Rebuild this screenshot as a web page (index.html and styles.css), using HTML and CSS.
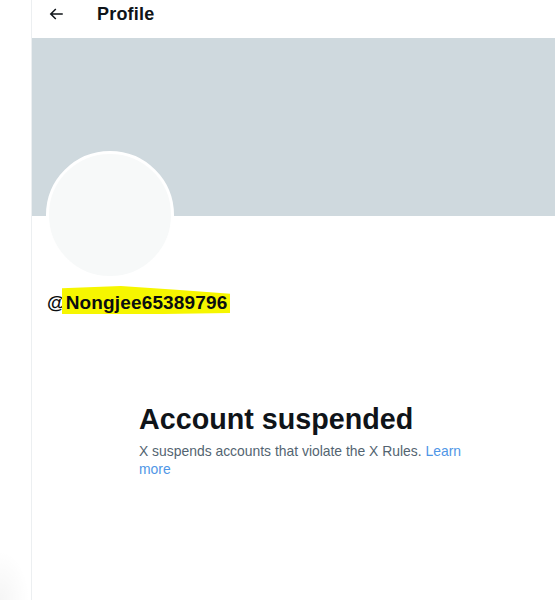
FILE: index.html
```html
<!DOCTYPE html>
<html>
<head>
<meta charset="utf-8">
<link rel="stylesheet" href="styles.css">
</head>
<body>
<div class="page">
  <div class="sidebar"></div>
  <div class="main">
    <div class="header">
      <span class="back">
        <svg viewBox="0 0 24 24" width="18" height="18"><path d="M7.414 13l5.043 5.04-1.414 1.42L3.586 12l7.457-7.46 1.414 1.42L7.414 11H21v2H7.414z" fill="#0f1419"/></svg>
      </span>
      <span class="title">Profile</span>
    </div>
    <div class="banner"></div>
    <div class="avatar-row">
      <div class="avatar"></div>
    </div>
    <div class="handle">@<span class="mark">Nongjee65389796</span></div>
    <div class="empty">
      <h2 class="headline">Account suspended</h2>
      <p class="desc">X suspends accounts that violate the X Rules. <span class="link">Learn more</span></p>
    </div>
  </div>
</div>
<div class="corner"></div>
</body>
</html>
```
FILE: styles.css
```css
html, body {
  margin: 0;
  padding: 0;
  background: #ffffff;
  height: 600px;
  overflow: hidden;
}
.page {
  display: flex;
  height: 600px;
  font-family: "Liberation Sans", Arial, sans-serif;
  color: #0f1419;
}
.sidebar {
  width: 31px;
  flex: none;
  border-right: 1px solid #eceff1;
}
.main {
  flex: 1;
  display: flex;
  flex-direction: column;
}
.header {
  height: 38px;
  display: flex;
  align-items: flex-start;
  padding-left: 15px;
  padding-top: 4px;
  box-sizing: border-box;
}
.back {
  display: flex;
  width: 18px;
  height: 18px;
  margin-top: 1px;
}
.title {
  margin-left: 32px;
  font-weight: bold;
  font-size: 18px;
  line-height: 20px;
  letter-spacing: 0.2px;
}
.banner {
  height: 178px;
  background: #cfd9de;
}
.avatar-row {
  margin-top: -65px;
  padding-left: 14px;
}
.avatar {
  width: 122px;
  height: 122px;
  border-radius: 50%;
  background: #f7f9f9;
  border: 3px solid #ffffff;
}
.handle {
  position: relative;
  margin-top: 12px;
  padding-left: 15px;
  font-size: 19px;
  font-weight: bold;
  line-height: 24px;
  letter-spacing: 0.15px;
  color: #0a0d10;
}
.mark {
  position: relative;
  z-index: 0;
}
.mark::before {
  content: "";
  position: absolute;
  left: -4px;
  right: -3px;
  top: -6px;
  bottom: -1px;
  background: #f6f600;
  z-index: -1;
  clip-path: polygon(0 8%, 35% 0, 70% 14%, 100% 28%, 100% 96%, 60% 100%, 0 100%);
}
.empty {
  padding-left: 107px;
  margin-top: 86px;
  width: 336px;
}
.headline {
  margin: 0;
  font-size: 28.7px;
  line-height: 36px;
  font-weight: bold;
  color: #0f1419;
}
.desc {
  margin: 5px 0 0;
  font-size: 13.9px;
  line-height: 18px;
  color: #536471;
}
.link {
  color: #4f96e6;
}
.corner {
  position: absolute;
  left: 0;
  top: 550px;
  width: 30px;
  height: 50px;
  background: radial-gradient(ellipse at 0% 100%, rgba(0,0,0,0.04), rgba(0,0,0,0) 70%);
}
```
